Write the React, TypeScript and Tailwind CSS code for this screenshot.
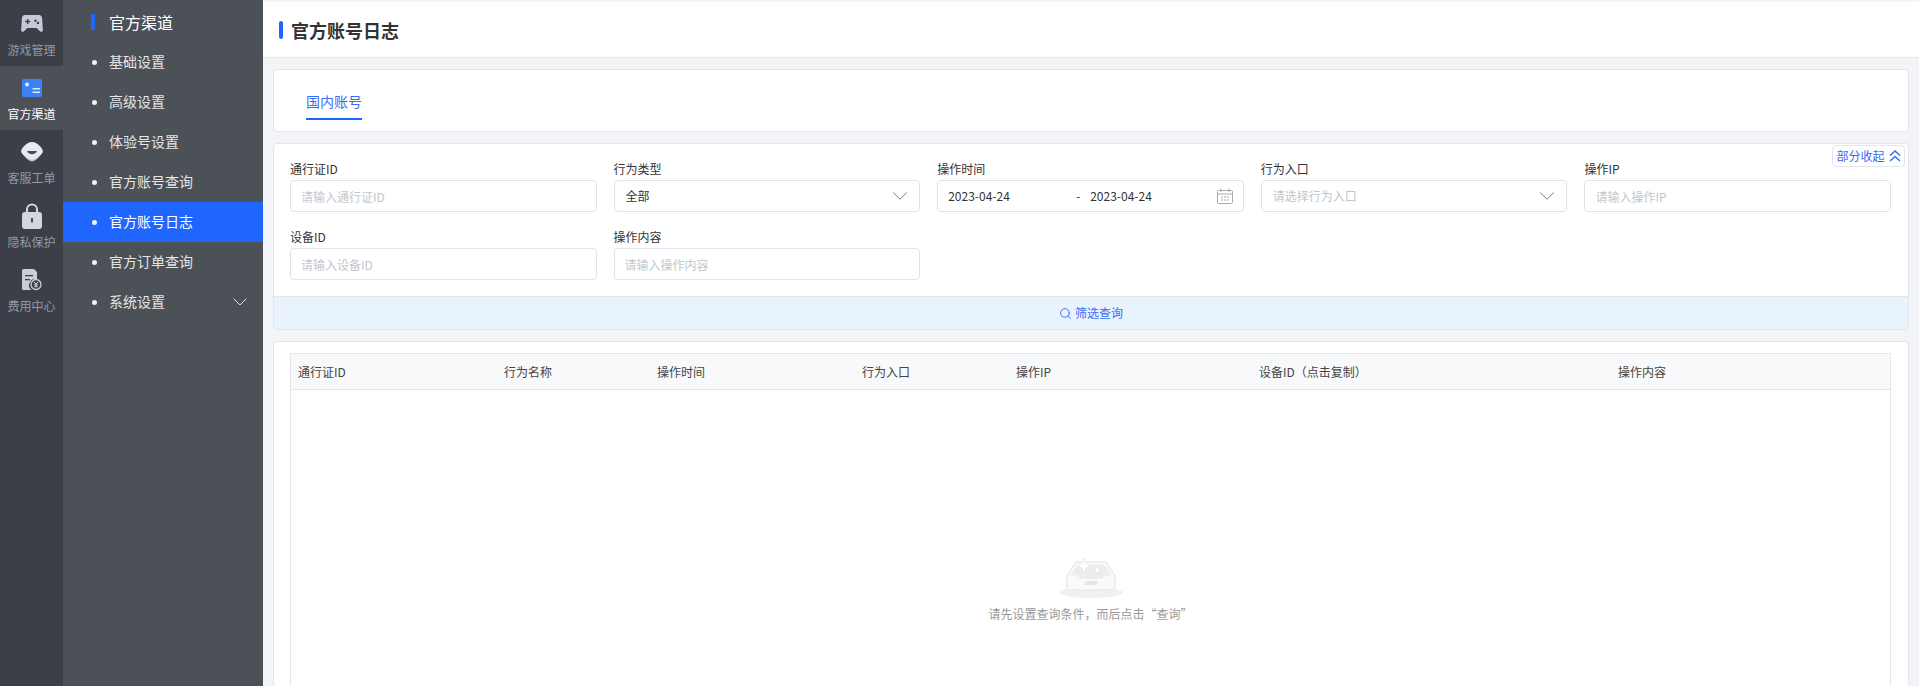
import { ChevronDown, Search } from "lucide-react";

const rail = [
  { label: "游戏管理", icon: "game" },
  { label: "官方渠道", icon: "card", active: true },
  { label: "客服工单", icon: "chat" },
  { label: "隐私保护", icon: "lock" },
  { label: "费用中心", icon: "bill" },
];

const menu = ["基础设置", "高级设置", "体验号设置", "官方账号查询", "官方账号日志", "官方订单查询", "系统设置"];

const columns = [
  { label: "通行证ID", w: "w-[206px]" },
  { label: "行为名称", w: "w-[153px]" },
  { label: "操作时间", w: "w-[205px]" },
  { label: "行为入口", w: "w-[154px]" },
  { label: "操作IP", w: "w-[243px]" },
  { label: "设备ID（点击复制）", w: "w-[359px]" },
  { label: "操作内容", w: "flex-1" },
];

function RailIcon({ name }: { name: string }) {
  if (name === "game") {
    return (
      <svg width="22" height="20" viewBox="0 0 22 20">
        <path fill="#c3c9d6" fillRule="evenodd" d="M4 1h14c1.6 0 2.7 1 3 2.6l.9 12.4c.1 1.6-1.8 2.4-2.9 1.2L15.6 14H6.400L3 17.200C1.900 18.400 0 17.600.1 16L1 3.600C1.300 2 2.400 1 4 1zM6 5v1.800H4.200v1.400H6V10h1.400V8.200h1.800V6.800H7.400V5zm8.500 0.500a1.200 1.200 0 1 0 0 2.400 1.200 1.200 0 0 0 0-2.400zm2.500 2.200a1.200 1.200 0 1 0 0 2.400 1.200 1.200 0 0 0 0-2.400z" />
      </svg>
    );
  }
  if (name === "card") {
    return (
      <svg width="20" height="18" viewBox="0 0 20 18">
        <rect width="20" height="18" rx="2" fill="#3b82f6" />
        <circle cx="5" cy="5.500" r="2" fill="#e8f0ff" />
        <rect x="10.500" y="9" width="7.500" height="1.500" fill="#dbe7ff" />
        <rect x="10.500" y="12.500" width="7.500" height="1.500" fill="#dbe7ff" />
      </svg>
    );
  }
  if (name === "chat") {
    return (
      <svg width="24" height="20" viewBox="0 0 24 20">
        <path fill="#b9bdc5" d="M3 12c2 3 5 7 9 7.500 4-.5 7-4.500 9-7.500z" />
        <path fill="#e8eaee" d="M12 0c3 0 5 1.300 7 3.200 1.500 1.400 3 3 3.800 5.300.3 1-.1 2-.9 3-1.800 2.300-4 4.500-7.400 5.800-1.700.6-3.300.6-5 0C6.100 16 3.900 13.800 2.100 11.500c-.8-1-1.200-2-.9-3C2 6.200 3.500 4.600 5 3.200 7 1.300 9 0 12 0z" />
        <path fill="#4a4d55" d="M7 9h10c-.5 2-2.500 3.200-5 3.200S7.500 11 7 9z" />
      </svg>
    );
  }
  if (name === "lock") {
    return (
      <svg width="20" height="26" viewBox="0 0 20 26">
        <path fill="none" stroke="#d3d6de" strokeWidth="2" d="M5 10V6.500a5 5 0 0 1 10 0V10" />
        <rect y="9" width="20" height="17" rx="3" fill="#d3d6de" />
        <rect x="9" y="15" width="2" height="4.500" fill="#4a4d55" />
      </svg>
    );
  }
  return (
    <svg width="21" height="22" viewBox="0 0 21 22">
      <path fill="#c9ced8" d="M2.500 0H13l3 3v7.500a6 6 0 0 0-5.500 10.500H2.500A1.500 1.500 0 0 1 1 19.500v-18A1.500 1.500 0 0 1 2.500 0z" />
      <rect x="4" y="6" width="8" height="1.300" fill="#3d4048" />
      <rect x="4" y="10" width="5" height="1.300" fill="#3d4048" />
      <circle cx="15" cy="15.500" r="5" fill="#3d4048" stroke="#c9ced8" strokeWidth="1.300" />
      <path fill="none" stroke="#c9ced8" strokeWidth="1" d="M13 12.800l2 2.500 2-2.500M15 15.300V18.500M13.200 15.800h3.600M13.200 17.200h3.600" />
    </svg>
  );
}

function Field({ label, children }: { label: string; children: React.ReactNode }) {
  return (
    <div>
      <div className="h-[20px] mb-px text-xs leading-[20px] text-[#333]">{label}</div>
      {children}
    </div>
  );
}

function TextInput({ placeholder }: { placeholder: string }) {
  return (
    <input
      placeholder={placeholder}
      className="block h-[32px] w-full rounded border border-[#e1e3ea] bg-white px-[10px] text-xs text-[#333] outline-none placeholder:text-[#c4c6cc]"
    />
  );
}

function SelectBox({ value, placeholder }: { value?: string; placeholder?: string }) {
  return (
    <div className="flex h-[32px] items-center justify-between rounded border border-[#e1e3ea] bg-white pl-[11px] pr-[6px] text-xs">
      <span className={value ? "text-[#333]" : "text-[#c4c6cc]"}>{value ?? placeholder}</span>
      <ChevronDown size={26} strokeWidth={0.9} className="text-[#777]" />
    </div>
  );
}

export default function App() {
  return (
    <div className="flex h-[686px] w-full overflow-hidden bg-[#f3f4f8] font-['Noto_Sans_CJK_SC','Noto_Sans',sans-serif]">
      <div className="flex w-[63px] shrink-0 flex-col bg-[#3c3f47] pt-[2px]">
        {rail.map((r) => (
          <div
            key={r.label}
            className={`flex h-[64px] flex-col items-center pt-[7px] ${r.active ? "bg-[#4c5158]" : ""}`}
          >
            <div className="flex h-[30px] items-center justify-center">
              <RailIcon name={r.icon} />
            </div>
            <span className={`mt-[2px] text-xs leading-[17px] ${r.active ? "text-white" : "text-[#8e9aa8]"}`}>{r.label}</span>
          </div>
        ))}
      </div>

      <div className="w-[200px] shrink-0 bg-[#4c5158] pt-[2px]">
        <div className="flex h-[40px] items-center pl-[28px]">
          <span className="h-[16px] w-[4px] bg-[#1f66ff]" />
          <span className="ml-[14px] text-base text-white">官方渠道</span>
        </div>
        {menu.map((m) => (
          <div
            key={m}
            className={`flex h-[40px] items-center pl-[29px] pr-[11px] text-sm ${m === "官方账号日志" ? "bg-[#1f66ff] text-white" : "text-[#e3e5e9]"}`}
          >
            <span className="h-[5px] w-[5px] rounded-full bg-[#eef0f3]" />
            <span className="mb-[2px] ml-[12px] flex-1">{m}</span>
            {m === "系统设置" && <ChevronDown size={24} strokeWidth={1} className="text-[#dfe2e6]" />}
          </div>
        ))}
      </div>

      <div className="flex min-w-0 flex-1 flex-col">
        <div className="h-[2px] bg-[#f3f4f6]" />
        <div className="flex h-[56px] items-center border-b border-[#e3e5ec] bg-white pl-[16px]">
          <span className="h-[18px] w-[4px] rounded-sm bg-[#1f66ff]" />
          <span className="ml-[8px] text-lg font-bold text-[#333]">官方账号日志</span>
        </div>

        <div className="flex flex-1 flex-col gap-[11px] pl-[10px] pr-[10px] pt-[11px]">
          <div className="h-[63px] rounded border border-[#e3e5ec] bg-white pl-[32px] pt-[16px]">
            <div className="inline-block h-[34px] border-b-2 border-[#1f66ff] text-sm leading-[30px] text-[#3b6cf6]">国内账号</div>
          </div>

          <div className="relative rounded border border-[#e3e5ec] bg-white">
            <button className="absolute right-[3px] top-[1px] flex h-[22px] w-[73px] items-center justify-center gap-[4px] rounded border border-[#e3e5f0] text-xs text-[#3b6cf6]">
              部分收起
              <svg width="12" height="12" viewBox="0 0 12 12" fill="none" stroke="currentColor" strokeWidth="1.500">
                <path d="M1 5.500L6 1l5 4.500M1 11L6 6.500 11 11" />
              </svg>
            </button>
            <div className="grid grid-cols-5 gap-x-[17px] gap-y-[15px] pb-[16px] pl-[16px] pr-[17px] pt-[15px]">
              <Field label="通行证ID">
                <TextInput placeholder="请输入通行证ID" />
              </Field>
              <Field label="行为类型">
                <SelectBox value="全部" />
              </Field>
              <Field label="操作时间">
                <div className="flex h-[32px] items-center rounded border border-[#e1e3ea] bg-white pl-[10px] pr-[10px] text-xs text-[#333]">
                  <span className="w-[128px]">2023-04-24</span>
                  <span className="w-[14px]">-</span>
                  <span className="flex-1">2023-04-24</span>
                  <svg width="16" height="16" viewBox="0 0 16 16" fill="none" stroke="#a9a9a9" strokeWidth="1">
                    <rect x="0.500" y="2.500" width="15" height="13" rx="1" />
                    <path d="M0.500 6h15M4 0.500v3.500M12 0.500v3.500M4 9h2M7 9h2M10 9h2M4 12h2M7 12h2M10 12h2" />
                  </svg>
                </div>
              </Field>
              <Field label="行为入口">
                <SelectBox placeholder="请选择行为入口" />
              </Field>
              <Field label="操作IP">
                <TextInput placeholder="请输入操作IP" />
              </Field>
              <Field label="设备ID">
                <TextInput placeholder="请输入设备ID" />
              </Field>
              <Field label="操作内容">
                <TextInput placeholder="请输入操作内容" />
              </Field>
            </div>
            <div className="flex h-[33px] items-center justify-center gap-[3px] rounded-b border-t border-[#e3e5ec] bg-[#e8f3fe] text-xs text-[#3b6cf6]">
              <Search size={13} strokeWidth={1.700} />
              筛选查询
            </div>
          </div>

          <div className="flex min-h-0 flex-1 flex-col rounded-t border border-b-0 border-[#e3e5ec] bg-white pl-[16px] pr-[17px] pt-[11px]">
            <div className="flex flex-1 flex-col border border-b-0 border-[#e3e5ec]">
              <div className="flex h-[36px] shrink-0 items-center border-b border-[#e3e5ec] bg-[#f8f9fb] pl-[7px] text-xs text-[#444]">
                {columns.map((c) => (
                  <div key={c.label} className={c.w}>{c.label}</div>
                ))}
              </div>
              <div className="flex flex-col items-center pt-[168px]">
                <svg width="64" height="40" viewBox="0 0 64 40">
                  <ellipse cx="32" cy="34.500" rx="32" ry="5.500" fill="#f1f1f1" />
                  <path fill="#fafafa" stroke="#ebebeb" strokeWidth="1.500" d="M8 18L17 4H47L56 18V29a3 3 0 0 1-3 3H11a3 3 0 0 1-3-3z" />
                  <path fill="#ececec" d="M11 17.500L19 6.500H45L53 17.500H46L42 21H22L18 17.500z" />
                  <path fill="#fff" stroke="#e6e6e6" strokeWidth="0.700" d="M25 0l2 6 5 2-5 2-2 6-2-6-5-2 5-2z" />
                  <path fill="#fff" stroke="#dcdcdc" strokeWidth="0.700" d="M38 8.500l3 3.500-3 3.500-3-3.500z" />
                  <rect x="25.500" y="23" width="13" height="4" rx="1.500" fill="#e6e6e6" />
                </svg>
                <div className="mt-[8px] text-xs text-[#999]">请先设置查询条件，而后点击“查询”</div>
              </div>
            </div>
          </div>
        </div>
      </div>
    </div>
  );
}
